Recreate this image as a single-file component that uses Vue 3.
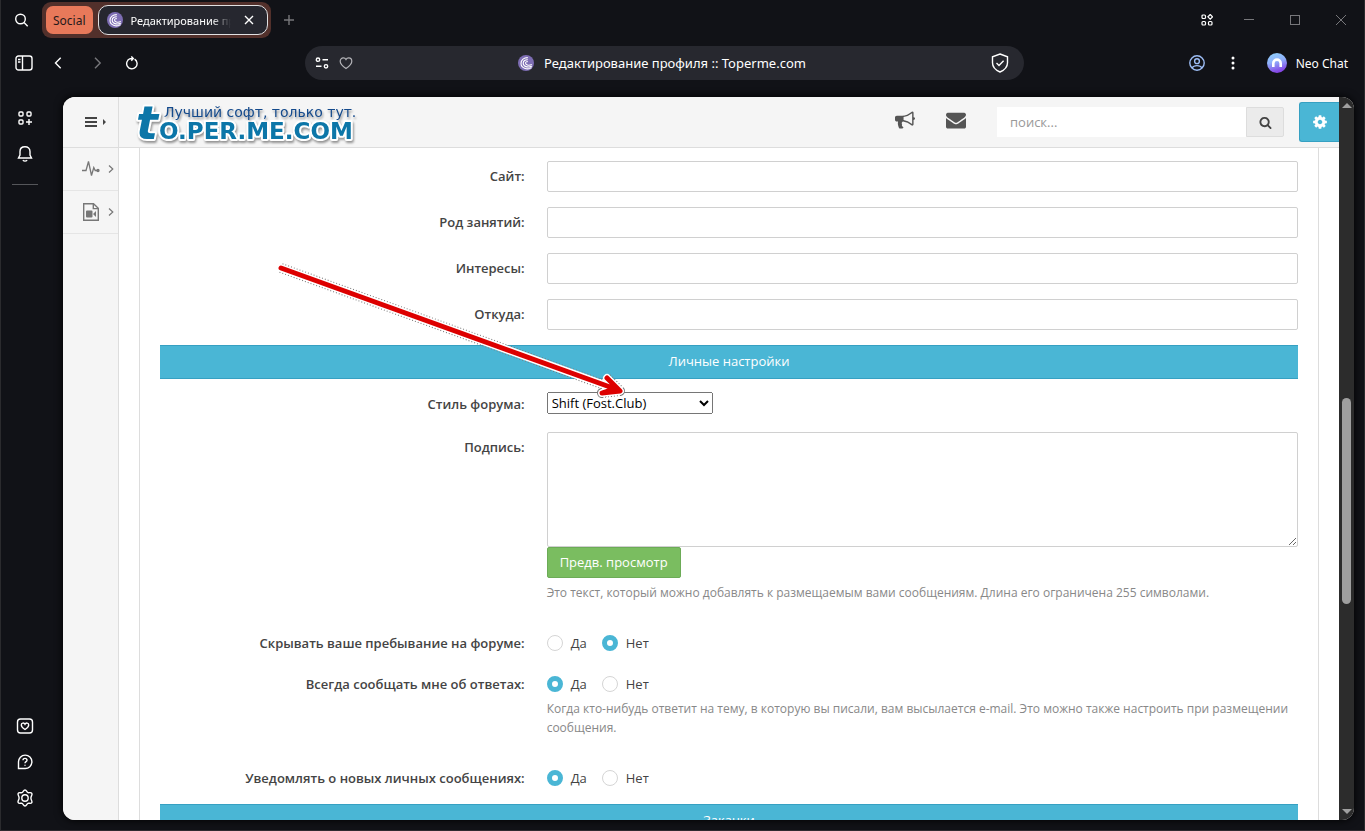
<template>
  <div class="browser">
    <header class="tab-strip">
      <button class="icon-btn tab-search" aria-label="Search tabs">
        <svg width="16" height="16" viewBox="0 0 16 16" class="line">
          <circle cx="7.500" cy="7" r="4.800" />
          <path d="M11 10.500l3.700 3.700" />
        </svg>
      </button>
      <div class="tab-group">
        <button class="group-name">Social</button>
        <div class="tab">
          <svg class="favicon" width="16" height="16" viewBox="0 0 16 16">
            <circle cx="8" cy="8" r="8" fill="#7d6db3" />
            <path d="M13.600 12.600C9 15.600 3 12.600 3 8.400 3 5 6 2.500 9.800 2.600M13.800 11.200C9.500 13.200 5.200 11.300 5.200 8.200 5.200 5.900 7.400 4.500 9.800 4.700M13.800 9.600C10.500 10.900 7.500 9.900 7.500 8.100 7.500 6.900 8.700 6.500 9.800 6.700" fill="none" stroke="#fff" stroke-width="1.100" />
          </svg>
          <span class="tab-title">Редактирование профиля</span>
          <button class="icon-btn tab-close" aria-label="Close tab">
            <svg width="10" height="10" viewBox="0 0 10 10" class="line"><path d="M1 1l8 8M9 1l-8 8" /></svg>
          </button>
        </div>
      </div>
      <button class="icon-btn new-tab" aria-label="New tab">
        <svg width="12" height="12" viewBox="0 0 12 12" class="line"><path d="M6 1v10M1 6h10" /></svg>
      </button>
      <div class="window-buttons">
        <button class="icon-btn" aria-label="Tab islands">
          <svg width="12" height="12" viewBox="0 0 12 12" class="line thin">
            <rect x="1" y="1" width="3.500" height="3.500" rx="1" />
            <rect x="1" y="7.500" width="3.500" height="3.500" rx="1" />
            <rect x="7.500" y="7.500" width="3.500" height="3.500" rx="1" />
            <path d="M9.200 .5l2.300 2.300-2.300 2.300-2.300-2.300z" />
          </svg>
        </button>
        <button class="icon-btn dim" aria-label="Minimize">
          <svg width="10" height="10" viewBox="0 0 10 10"><path d="M0 4.500h10" stroke="currentColor" /></svg>
        </button>
        <button class="icon-btn dim" aria-label="Maximize">
          <svg width="10" height="10" viewBox="0 0 10 10"><rect x=".5" y=".5" width="9" height="9" fill="none" stroke="currentColor" /></svg>
        </button>
        <button class="icon-btn dim" aria-label="Close window">
          <svg width="10" height="10" viewBox="0 0 10 10"><path d="M0 0l10 10M10 0L0 10" stroke="currentColor" /></svg>
        </button>
      </div>
    </header>

    <div class="toolbar">
      <div class="nav-buttons">
        <button class="icon-btn" aria-label="Sidebar">
          <svg width="18" height="16" viewBox="0 0 18 16" class="line">
            <rect x="1" y="1" width="16" height="14" rx="2.500" />
            <path d="M7.500 1v14M3 4.500h2.500M3 7h2.500" />
          </svg>
        </button>
        <button class="icon-btn" aria-label="Back">
          <svg width="12" height="12" viewBox="0 0 12 12" class="line"><path d="M6.700 .8L1.500 6l5.200 5.200" /></svg>
        </button>
        <button class="icon-btn dim" aria-label="Forward">
          <svg width="12" height="12" viewBox="0 0 12 12" class="line"><path d="M5 .8L10.200 6l-5.200 5.200" /></svg>
        </button>
        <button class="icon-btn" aria-label="Reload">
          <svg width="14" height="14" viewBox="0 0 14 14" class="line">
            <path d="M9.600 3.200A5.200 5.200 0 1 1 5.200 2.700L8 2.500M6.300 .4l2 2.100-2 2.200" />
          </svg>
        </button>
      </div>

      <div class="address">
        <div class="address-left">
          <svg width="14" height="14" viewBox="0 0 14 14" class="line">
            <circle cx="3" cy="3.700" r="1.700" />
            <path d="M7.500 3.700h5.500M1 10.300h5.500" />
            <circle cx="11" cy="10.300" r="1.700" />
          </svg>
          <svg width="14" height="14" viewBox="0 0 14 14" class="line faint">
            <path d="M7 12.500C3 9.800 1.200 7.800 1.200 5.200 1.200 3.200 2.600 1.900 4.300 1.900 5.500 1.900 6.500 2.500 7 3.500 7.500 2.500 8.500 1.900 9.700 1.900c1.700 0 3.100 1.300 3.100 3.300C12.800 7.800 11 9.800 7 12.500z" />
          </svg>
        </div>
        <div class="address-title">
          <svg class="favicon" width="16" height="16" viewBox="0 0 16 16">
            <circle cx="8" cy="8" r="8" fill="#7d6db3" />
            <path d="M13.600 12.600C9 15.600 3 12.600 3 8.400 3 5 6 2.500 9.800 2.600M13.800 11.200C9.500 13.200 5.200 11.300 5.200 8.200 5.200 5.900 7.400 4.500 9.800 4.700M13.800 9.600C10.500 10.900 7.500 9.900 7.500 8.100 7.500 6.900 8.700 6.500 9.800 6.700" fill="none" stroke="#fff" stroke-width="1.100" />
          </svg>
          <span>Редактирование профиля :: Toperme.com</span>
        </div>
        <div class="address-right">
          <svg width="18" height="20" viewBox="0 0 18 20" class="line">
            <path d="M9 1l7.500 2.800v6c0 4.200-3 7.300-7.500 9.200-4.500-1.900-7.500-5-7.500-9.200v-6z" />
            <path d="M5.500 10l2.500 2.500 4.600-4.700" />
          </svg>
        </div>
      </div>

      <div class="tool-buttons">
        <button class="icon-btn profile" aria-label="Profile">
          <svg width="16" height="16" viewBox="0 0 16 16" class="line">
            <circle cx="8" cy="8" r="7.200" />
            <circle cx="8" cy="6.200" r="2.400" />
            <path d="M3 13c1-1.700 3-2.400 5-2.400s4 .7 5 2.400" />
          </svg>
        </button>
        <button class="icon-btn" aria-label="Menu">
          <svg width="4" height="14" viewBox="0 0 4 14" fill="currentColor">
            <circle cx="2" cy="2" r="1.500" /><circle cx="2" cy="7" r="1.500" /><circle cx="2" cy="12" r="1.500" />
          </svg>
        </button>
        <button class="neo">
          <svg width="20" height="20" viewBox="0 0 20 20">
            <defs>
              <linearGradient id="neo" x1="0" y1="0" x2="0.300" y2="1">
                <stop offset="0" stop-color="#8fd3fb" />
                <stop offset="0.500" stop-color="#8fb0fa" />
                <stop offset="1" stop-color="#8547e6" />
              </linearGradient>
            </defs>
            <circle cx="10" cy="10" r="10" fill="url(#neo)" />
            <path d="M6.300 14v-3.700a3.700 3.700 0 0 1 7.400 0V14" fill="none" stroke="#fff" stroke-width="2.600" />
          </svg>
          Neo Chat
        </button>
      </div>
    </div>

    <div class="workspace">
      <aside class="rail">
        <button class="icon-btn" aria-label="Add panel">
          <svg width="14" height="14" viewBox="0 0 14 14" class="line">
            <rect x="1" y="1" width="4" height="4" rx="1" />
            <rect x="9" y="1" width="4" height="4" rx="1" />
            <rect x="1" y="9" width="4" height="4" rx="1" />
            <path d="M11 8v6M8 11h6" />
          </svg>
        </button>
        <button class="icon-btn" aria-label="Notifications">
          <svg width="16" height="16" viewBox="0 0 16 16" class="line">
            <path d="M1.500 12h13L13 9V5.500C13 2.500 11 .8 8 .8S3 2.500 3 5.500V9zM5.800 14.200Q8 16 10.200 14.200" />
          </svg>
        </button>
        <hr>
        <div class="rail-space"></div>
        <button class="icon-btn" aria-label="Favourites">
          <svg width="18" height="16" viewBox="0 0 18 16" class="line">
            <rect x="1.500" y="1" width="15" height="14" rx="3" />
            <path d="M9 11.500C6.500 10 5.300 8.600 5.300 7c0-2.300 2.800-2.500 3.700-.8C9.900 4.500 12.700 4.700 12.700 7c0 1.600-1.200 3-3.700 4.500z" />
          </svg>
        </button>
        <button class="icon-btn" aria-label="Help">
          <svg width="16" height="16" viewBox="0 0 16 16" class="line">
            <path d="M1.500 14.500V8A6.700 6.700 0 1 1 8 14.500z" />
            <path d="M6 6.300c0-2.700 4-2.400 4-.1C10 7.700 8 7.600 8 9.300M8 10.800v1" />
          </svg>
        </button>
        <button class="icon-btn" aria-label="Settings">
          <svg width="18" height="18" viewBox="0 0 18 18" class="line">
            <path d="M9 1c1.700 0 1.700 2.300 3 2.700s2.800-.9 3.800.6-.9 2.500-.9 4.700 1.800 3.300.9 4.700-2.500.2-3.800.6S10.700 17 9 17s-1.700-2.300-3-2.700-2.800.8-3.800-.6.900-2.500.9-4.700S1.300 5.700 2.200 4.300s2.500-.2 3.800-.6S7.300 1 9 1z" />
            <circle cx="9" cy="9" r="3.200" />
          </svg>
        </button>
      </aside>

      <div class="page">
        <div class="site">
          <div class="site-header">
            <button class="menu-toggle" aria-label="Toggle menu">
              <svg width="22" height="12" viewBox="0 0 22 12" fill="#444">
                <path d="M0 1h12v2H0zM0 5h12v2H0zM0 9h12v2H0zM18 3l3 3-3 3z" />
              </svg>
            </button>
            <a href="#" class="logo" aria-label="to.per.me.com">
              <svg width="230" height="50" viewBox="0 0 230 50">
                <g class="logo-name">
                  <text x="3" y="42" class="logo-t">t</text>
                  <text x="26" y="42">O.PER.ME.COM</text>
                </g>
                <text x="31" y="20" class="logo-tag">Лучший софт, только тут.</text>
              </svg>
            </a>
            <div class="header-tools">
              <a href="#" aria-label="News">
                <svg width="20" height="20" viewBox="0 0 1792 1792" fill="#555"><path d="M1664 640q53 0 90.500 37.500t37.500 90.500-37.500 90.500-90.500 37.500v384q0 52-38 90t-90 38q-417-347-812-380-58 19-91 66t-31 100.500 40 92.500q-20 33-23 65.500t6 58 33.500 55 48 50 61.500 50.500q-29 58-111.500 83t-168.500 11.500-132-55.500q-7-23-29.500-87.500t-32-94.500-23-89-15-101 3.500-98.500 22-110.500h-122q-66 0-113-47t-47-113v-192q0-66 47-113t113-47h480q435 0 896-384 52 0 90 38t38 90v384zm-128 604v-954q-394 302-768 343v270q377 42 768 341z" /></svg>
              </a>
              <a href="#" aria-label="Messages">
                <svg width="20" height="20" viewBox="0 0 1792 1792" fill="#555"><path d="M1792 710v794q0 66-47 113t-113 47h-1472q-66 0-113-47t-47-113v-794q44 49 101 87 362 246 497 345 57 42 92.500 65.500t94.500 48 110 24.500h2q51 0 110-24.500t94.500-48 92.500-65.500q170-123 498-345 57-39 100-87zm0-294q0 79-49 151t-122 123q-376 261-468 325-10 7-42.500 31t-54 38.500-52 32.500-57.500 27-50 9h-2q-23 0-50-9t-57.500-27-52-32.500-54-38.500-42.500-31q-91-64-262-182.500t-205-142.500q-62-42-117-115.500t-55-136.500q0-78 41.500-130t118.500-52h1472q65 0 112.500 47t47.500 113z" /></svg>
              </a>
            </div>
            <form class="search" @submit.prevent>
              <input v-model="query" type="text" placeholder="поиск..." aria-label="поиск">
              <button aria-label="Найти">
                <svg width="13" height="13" viewBox="0 0 1792 1792" fill="#444"><path d="M1216 832q0-185-131.500-316.500t-316.500-131.500-316.500 131.500-131.500 316.500 131.500 316.500 316.500 131.500 316.500-131.500 131.500-316.500zm512 832q0 52-38 90t-90 38q-54 0-90-38l-343-342q-179 124-399 124-143 0-273.500-55.500t-225-150-150-225-55.500-273.500 55.500-273.500 150-225 225-150 273.500-55.500 273.500 55.500 225 150 150 225 55.500 273.500q0 220-124 399l343 343q37 37 37 90z" /></svg>
              </button>
            </form>
            <button class="site-settings" aria-label="Настройки">
              <svg width="16" height="16" viewBox="0 0 1792 1792" fill="#fff"><path d="M1152 896q0-106-75-181t-181-75-181 75-75 181 75 181 181 75 181-75 75-181zm512-109v222q0 12-8 23t-20 13l-185 28q-19 54-39 91 35 50 107 138 10 12 10 25t-9 23q-27 37-99 108t-94 71q-12 0-26-9l-138-108q-44 23-91 38-16 136-29 186-7 28-36 28h-222q-14 0-24.500-8.500t-11.500-21.500l-28-184q-49-16-90-37l-141 107q-10 9-25 9-14 0-25-11-126-114-165-168-7-10-7-23 0-12 8-23 15-21 51-66.500t54-70.500q-27-50-41-99l-183-27q-13-2-21-12.500t-8-23.500v-222q0-12 8-23t19-13l186-28q14-46 39-92-40-57-107-138-10-12-10-24 0-10 9-23 26-36 98.500-107.500t94.500-71.500q13 0 26 10l138 107q44-23 91-38 16-136 29-186 7-28 36-28h222q14 0 24.500 8.500t11.500 21.500l28 184q49 16 90 37l142-107q9-9 24-9 13 0 25 10 129 119 165 170 7 8 7 22 0 12-8 23-15 21-51 66.500t-54 70.500q26 50 41 98l183 28q13 2 21 12.500t8 23.500z" /></svg>
            </button>
          </div>

          <div class="site-body">
            <nav class="site-nav">
              <a href="#" aria-label="Activity">
                <svg width="18" height="18" viewBox="0 0 18 18" fill="none" stroke="#777" stroke-width="1.300">
                  <path d="M0 10.500h4L6.500 1.500l3 14 2.300-8 1.400 3h2" />
                  <circle cx="16" cy="10.500" r="1" fill="#777" />
                </svg>
                <svg width="6" height="8" viewBox="0 0 6 8" fill="none" stroke="#777" stroke-width="1.200"><path d="M1 .5L4.800 4 1 7.500" /></svg>
              </a>
              <a href="#" aria-label="Video">
                <svg width="18" height="20" viewBox="0 0 18 20" fill="none" stroke="#777" stroke-width="1.400">
                  <path d="M1.700 1.700h9.800l4.800 4.600v12H1.700zM11.300 2v4.600h4.900" />
                  <path d="M4 9.500q0-1 1-1h4.500q1 0 1 1v5q0 1-1 1H5q-1 0-1-1zM11 12l3-3v6z" fill="#777" stroke="none" />
                </svg>
                <svg width="6" height="8" viewBox="0 0 6 8" fill="none" stroke="#777" stroke-width="1.200"><path d="M1 .5L4.800 4 1 7.500" /></svg>
              </a>
            </nav>

            <main class="content">
              <form class="panel" @submit.prevent>
                <div v-for="field in textFields" :key="field.id" class="row">
                  <label class="caption" :for="field.id">{{ field.label }}</label>
                  <div class="field">
                    <input :id="field.id" v-model="field.value" type="text" class="text-input">
                  </div>
                </div>

                <h2 class="section">Личные настройки</h2>

                <div class="row">
                  <label class="caption" for="style">Стиль форума:</label>
                  <div class="field field-select">
                    <select id="style" v-model="style">
                      <option>Shift (Fost.Club)</option>
                    </select>
                  </div>
                </div>

                <div class="row">
                  <label class="caption" for="signature">Подпись:</label>
                  <div class="field">
                    <textarea id="signature" v-model="signature"></textarea>
                    <button class="preview">Предв. просмотр</button>
                    <p class="help">Это текст, который можно добавлять к размещаемым вами сообщениям. Длина его ограничена 255 символами.</p>
                  </div>
                </div>

                <div v-for="item in switches" :key="item.id" class="row" role="radiogroup" :aria-labelledby="item.id">
                  <span :id="item.id" class="caption">{{ item.label }}</span>
                  <div class="field">
                    <div class="options">
                      <label v-for="option in ['Да', 'Нет']" :key="option" class="option">
                        <input v-model="item.value" type="radio" :name="item.id + '-value'" :value="option">
                        {{ option }}
                      </label>
                    </div>
                    <p v-if="item.help" class="help">{{ item.help }}</p>
                  </div>
                </div>

                <h2 class="section">Закачки</h2>
              </form>
            </main>
          </div>
        </div>

        <div class="scrollbar">
          <svg width="10" height="5" viewBox="0 0 10 5"><path d="M0 5l5-5 5 5z" fill="#a0a0a0" /></svg>
          <div class="track-before"></div>
          <div class="thumb"></div>
          <div class="track-after"></div>
          <svg width="10" height="5" viewBox="0 0 10 5"><path d="M0 0h10L5 5z" fill="#a0a0a0" /></svg>
        </div>

        <svg class="pointer" width="360" height="140" viewBox="0 0 360 140">
          <g fill="none" stroke-linecap="round" stroke-linejoin="round">
            <path :d="arrow" stroke="#777" stroke-width="10" stroke-dasharray="1 2" stroke-linecap="butt" />
            <path :d="arrow" stroke="#fff" stroke-width="8" />
            <path :d="arrow" stroke="#dd0000" stroke-width="5" />
          </g>
        </svg>
      </div>
    </div>
  </div>
</template>

<script setup>
import { ref } from 'vue'

const query = ref('')
const style = ref('Shift (Fost.Club)')
const signature = ref('')

const textFields = ref([
  { id: 'site', label: 'Сайт:', value: '' },
  { id: 'occupation', label: 'Род занятий:', value: '' },
  { id: 'interests', label: 'Интересы:', value: '' },
  { id: 'location', label: 'Откуда:', value: '' }
])

const switches = ref([
  { id: 'hide-online', label: 'Скрывать ваше пребывание на форуме:', value: 'Нет' },
  {
    id: 'notify-reply',
    label: 'Всегда сообщать мне об ответах:',
    value: 'Да',
    help: 'Когда кто-нибудь ответит на тему, в которую вы писали, вам высылается e-mail. Это можно также настроить при размещении сообщения.'
  },
  { id: 'notify-pm', label: 'Уведомлять о новых личных сообщениях:', value: 'Да' }
])

const arrow = 'M9 8L338 127M335 118L348 131L330 133L342 129'
</script>

<style>
body {
  background: #111217;
}
</style>

<style scoped>
* {
  box-sizing: border-box;
}

.browser {
  display: flex;
  flex-direction: column;
  height: 100vh;
  background: #111217;
  border-left: 1px solid #2b2b2e;
  border-right: 1px solid #2b2b2e;
  border-bottom: 1px solid #2f2a30;
  color: #fff;
  font-family: "Noto Sans", "Open Sans", sans-serif;
  font-size: 12px;
}

button {
  font: inherit;
  color: inherit;
  cursor: pointer;
}

svg {
  display: block;
  flex: none;
}

.line {
  fill: none;
  stroke: currentColor;
  stroke-width: 1.4;
}

.thin {
  stroke-width: 1.2;
}

.faint {
  stroke: #b4b4b8;
  stroke-width: 1.2;
}

.icon-btn {
  display: flex;
  align-items: center;
  justify-content: center;
  flex: none;
  width: 36px;
  height: 36px;
  padding: 0;
  border: 0;
  background: none;
}

.icon-btn.dim {
  color: #77777b;
}

.tab-strip {
  display: flex;
  align-items: center;
  flex: none;
  height: 40px;
  padding-left: 2px;
}

.tab-search {
  margin-right: 3px;
}

.tab-group {
  display: flex;
  align-items: center;
  gap: 5px;
  height: 36px;
  padding: 0 3px 0 4px;
  border-radius: 9px;
  background: #52302b;
}

.group-name {
  height: 28px;
  padding: 0 7px;
  border: 0;
  border-radius: 7px;
  background: #e8795a;
  color: #26191a;
}

.tab {
  display: flex;
  align-items: center;
  width: 170px;
  height: 30px;
  padding-left: 8px;
  border: 1px solid #e0e0e2;
  border-radius: 10px;
  background: #26272f;
}

.tab-title {
  flex: 1;
  margin-left: 8px;
  overflow: hidden;
  font-size: 11px;
  white-space: nowrap;
  -webkit-mask-image: linear-gradient(to right, #000 80%, transparent);
  mask-image: linear-gradient(to right, #000 80%, transparent);
}

.new-tab {
  color: #77777b;
}

.window-buttons {
  display: flex;
  margin-left: auto;
}

.window-buttons .icon-btn {
  width: 46px;
}

.window-buttons .icon-btn:first-child {
  width: 38px;
}

.toolbar {
  display: grid;
  grid-template-columns: 304px 1fr 340px;
  align-items: center;
  flex: none;
  height: 46px;
}

.nav-buttons {
  display: flex;
  padding-left: 5px;
}

.address {
  display: grid;
  grid-template-columns: 1fr auto 1fr;
  align-items: center;
  height: 34px;
  padding: 0 15px 0 10px;
  border-radius: 17px;
  background: #27282f;
  font-size: 13px;
}

.address-left,
.address-title {
  display: flex;
  align-items: center;
  gap: 10px;
}

.address-right {
  display: flex;
  justify-content: flex-end;
}

.tool-buttons {
  display: flex;
  align-items: center;
  justify-content: flex-end;
  padding-right: 16px;
}

.profile {
  color: #9dbdf5;
}

.neo {
  display: flex;
  align-items: center;
  gap: 9px;
  margin-left: 16px;
  padding: 0;
  border: 0;
  background: none;
}

.workspace {
  display: flex;
  flex: 1;
  min-height: 0;
  padding: 11px 10px 10px 0;
}

.rail {
  display: flex;
  flex-direction: column;
  align-items: center;
  flex: none;
  width: 48px;
  margin-right: 14px;
  padding-top: 3px;
}

.rail hr {
  width: 26px;
  margin: 12px 0;
  border: 0;
  border-top: 1px solid #55565a;
}

.rail-space {
  flex: 1;
}

.rail .icon-btn:last-child {
  margin-bottom: 4px;
}

.page {
  position: relative;
  display: flex;
  flex: 1;
  min-width: 0;
  overflow: hidden;
  border-radius: 12px;
  background: #fff;
  box-shadow: 0 0 8px #000;
  color: #444;
  font-family: "Open Sans", sans-serif;
  font-size: 13px;
  line-height: 20px;
}

.site {
  display: flex;
  flex-direction: column;
  flex: 1;
  min-width: 0;
}

.site-header {
  display: flex;
  align-items: center;
  flex: none;
  height: 51px;
  border-bottom: 1px solid #ddd;
  background: #f5f5f5;
}

.menu-toggle {
  align-self: stretch;
  width: 56px;
  padding: 0 0 0 22px;
  border: 0;
  border-right: 1px solid #ddd;
  background: none;
}

.logo {
  margin-left: 14px;
}

.logo-name {
  fill: #0c76a8;
  stroke: #fff;
  stroke-width: 4px;
  stroke-linejoin: round;
  paint-order: stroke;
  font: bold 23px "DejaVu Sans", sans-serif;
  filter: drop-shadow(1px 2px 1px #0006);
}

.logo-name .logo-t {
  font-size: 46px;
  font-style: oblique;
}

.logo-tag {
  fill: #144a8c;
  font: 14px "DejaVu Sans", sans-serif;
  filter: drop-shadow(1px 2px 1px #0006);
}

.header-tools {
  display: flex;
  gap: 31px;
  margin: 0 31px 0 auto;
  padding-bottom: 4px;
}

.search {
  display: flex;
  margin-right: 15px;
}

.search input {
  width: 249px;
  height: 30px;
  padding: 0 13px;
  border: 0;
  background: #fff;
  font: 13px "Open Sans", sans-serif;
}

.search input::placeholder {
  color: #999;
}

.search button {
  display: flex;
  align-items: center;
  justify-content: center;
  width: 38px;
  height: 30px;
  padding: 0;
  border: 1px solid #ddd;
  border-radius: 0 2px 2px 0;
  background: #ebebeb;
}

.site-settings {
  display: flex;
  align-items: center;
  justify-content: center;
  width: 40px;
  height: 40px;
  padding: 0;
  border: 1px solid #36a0c2;
  border-right: 0;
  border-radius: 3px 0 0 3px;
  background: #4ab6d5;
}

.site-body {
  display: flex;
  flex: 1;
  min-height: 0;
}

.site-nav {
  flex: none;
  width: 56px;
  border-right: 1px solid #ddd;
  background: #f5f5f5;
}

.site-nav a {
  display: flex;
  align-items: center;
  justify-content: space-between;
  height: 43px;
  padding: 0 4px 0 19px;
  border-bottom: 1px solid #e5e5e5;
}

.content {
  flex: 1;
  min-width: 0;
  padding: 0 20px;
  overflow: hidden;
}

.panel {
  padding: 13px 20px 0;
  border: 1px solid #ddd;
  border-width: 0 1px;
}

.row {
  display: grid;
  grid-template-columns: 1fr 2fr;
  margin: 0 -11px 15px;
}

.caption {
  padding: 5px 11px 0;
  font-weight: 600;
  text-align: right;
}

.field {
  min-width: 0;
  padding: 0 11px;
}

.field-select {
  padding-top: 3px;
  padding-bottom: 3px;
}

.text-input,
textarea {
  display: block;
  width: 100%;
  height: 31px;
  padding: 4px 8px;
  border: 1px solid #d0d0d0;
  border-radius: 2px;
  background: #fff;
  font: inherit;
}

textarea {
  height: 115px;
}

select {
  display: block;
  width: 166px;
  height: 22px;
  font: 13px "Open Sans", sans-serif;
}

.preview {
  display: block;
  height: 31px;
  padding: 0 12px 2px;
  border: 1px solid #6cab57;
  border-radius: 2px;
  background: #7abd60;
  color: #fff;
}

.help {
  margin: 5px 0 11px;
  color: #888;
  font-size: 12px;
  line-height: 19px;
}

.section {
  height: 34px;
  margin: 0 0 10px;
  border: 1px solid #36a0c2;
  border-width: 1px 0;
  background: #4ab6d5;
  color: #fff;
  font-size: 13px;
  font-weight: 400;
  line-height: 30px;
  text-align: center;
}

.options {
  display: flex;
  gap: 15px;
  padding-top: 5px;
}

.row[role="radiogroup"] .options {
  height: 26px;
}

.row[role="radiogroup"] .help {
  margin-top: 4px;
}

.option {
  display: flex;
  align-items: center;
  gap: 8px;
  height: 20px;
}

.option input {
  appearance: none;
  width: 16px;
  height: 16px;
  margin: 0;
  border: 1px solid #d5d5d5;
  border-radius: 50%;
  background: #fff;
}

.option input:checked {
  border: 5px solid #4ab6d5;
}

.scrollbar {
  display: flex;
  flex-direction: column;
  align-items: center;
  flex: none;
  width: 15px;
  padding: 6px 0;
  background: #2c2c2c;
}

.track-before {
  flex: 290;
}

.thumb {
  flex: 206;
  width: 9px;
  border-radius: 5px;
  background: #9f9f9f;
}

.track-after {
  flex: 205;
}

.pointer {
  position: absolute;
  top: 163px;
  left: 209px;
  pointer-events: none;
}
</style>
